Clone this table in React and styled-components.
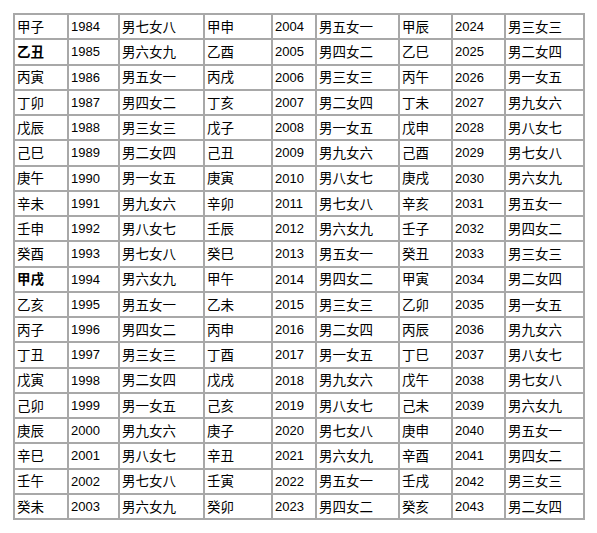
import React from 'react'
import { styled, createGlobalStyle } from 'styled-components'

const STEMS = '甲乙丙丁戊己庚辛壬癸'
const BRANCHES = '子丑寅卯辰巳午未申酉戌亥'
const NUMS = ['', '一', '二', '三', '四', '五', '六', '七', '八', '九']
const BOLD = ['乙丑', '甲戌']

const ganzhi = (y) => STEMS[(y - 4) % 10] + BRANCHES[(y - 4) % 12]

const children = (y) => {
  const m = (((7 - (y - 1984)) % 9) + 9) % 9 || 9
  const f = (15 - m) % 9 || 9
  return '男' + NUMS[m] + '女' + NUMS[f]
}

const colWidths = [54, 51, 85, 68, 44, 83, 53, 53, 79]

const GlobalStyle = createGlobalStyle`
  body {
    margin: 0;
    background: #fff;
  }
`

const Page = styled.div`
  padding: 13px 0 0 13px;
  width: 597px;
  height: 533px;
  box-sizing: border-box;
  background: #fff;
`

const Table = styled.table`
  border-collapse: collapse;
  table-layout: fixed;
  width: 570px;
  border: 2px solid #a4a4a4;
`

const Row = styled.tr`
  height: 25.25px;
`

const Cell = styled.td`
  border: 2px solid #a8a8a8;
  padding: 0 0 0 2px;
  color: #000;
  white-space: nowrap;
  overflow: hidden;
  vertical-align: middle;
  font-family: ${(p) =>
    p.$num
      ? '"Liberation Sans", Arial, sans-serif'
      : '"Noto Sans CJK SC", "Noto Sans", sans-serif'};
  font-size: ${(p) => (p.$num ? '13px' : '13.5px')};
  font-weight: ${(p) => (p.$bold ? 700 : 400)};
  line-height: 1;
`

const Block = ({ year }) => {
  const gz = ganzhi(year)
  return (
    <>
      <Cell $bold={BOLD.includes(gz) && year < 2000}>{gz}</Cell>
      <Cell $num>{year}</Cell>
      <Cell>{children(year)}</Cell>
    </>
  )
}

const App = () => {
  const rows = Array.from({ length: 20 }, (_, i) => 1984 + i)
  return (
    <Page>
      <GlobalStyle />
      <Table>
        <colgroup>
          {colWidths.map((w, i) => (
            <col key={i} style={{ width: w }} />
          ))}
        </colgroup>
        <tbody>
          {rows.map((y) => (
            <Row key={y}>
              <Block year={y} />
              <Block year={y + 20} />
              <Block year={y + 40} />
            </Row>
          ))}
        </tbody>
      </Table>
    </Page>
  )
}

export default App
